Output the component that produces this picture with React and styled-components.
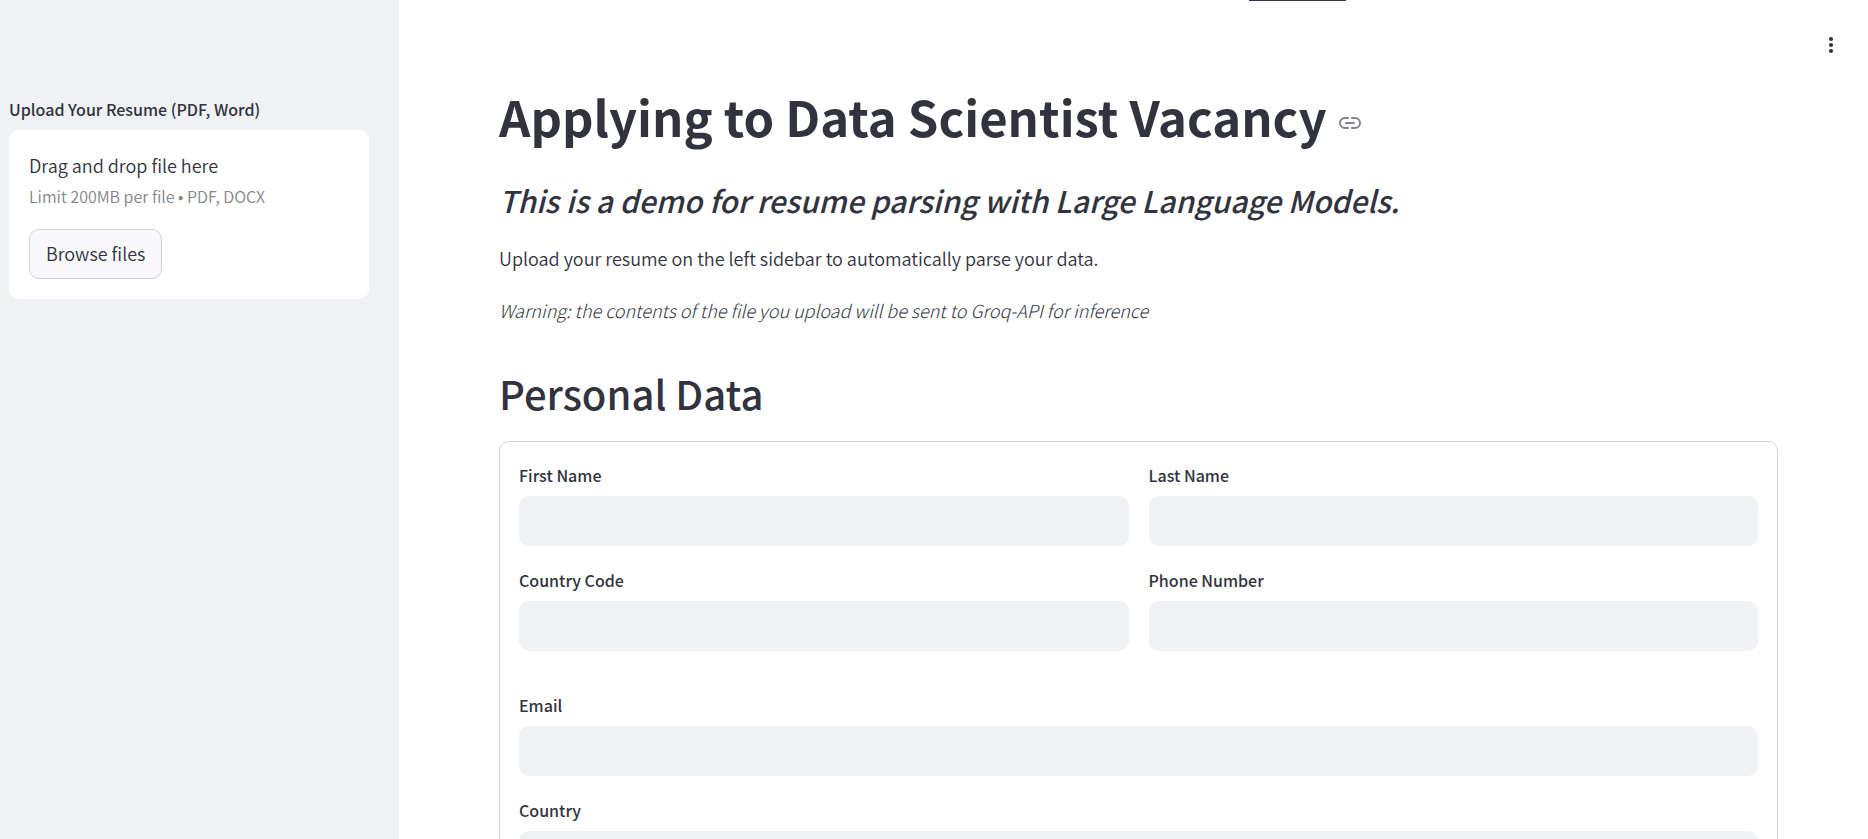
import React from "react";
import styled, { createGlobalStyle } from "styled-components";

const GlobalStyle = createGlobalStyle`
  *, *::before, *::after { box-sizing: border-box; }
  body {
    margin: 0;
    background: #fff;
    color: #31333f;
    font-family: "Noto Sans CJK JP", "Noto Sans", sans-serif;
    font-size: 18px;
    line-height: 32px;
  }
  button, input { font: inherit; color: inherit; }
`;

const Page = styled.div`
  display: flex;
  height: 100vh;
  overflow: hidden;
`;

const Sidebar = styled.aside`
  flex: 0 0 399px;
  padding: 95px 30px 0 9px;
  background: #f0f2f6;
`;

const Label = styled.label`
  display: block;
  height: 35px;
  font-size: 16px;
  font-weight: 500;
  line-height: 28px;
`;

const Dropzone = styled.section`
  display: flex;
  flex-direction: column;
  align-items: flex-start;
  padding: 20px;
  border-radius: 10px;
  background: #fff;
`;

const DropTitle = styled.span`
  font-weight: 350;
  line-height: 30px;
`;

const DropHint = styled.small`
  margin-bottom: 17px;
  font-size: 16px;
  font-weight: 350;
  color: #83858c;
`;

const BrowseButton = styled.button`
  height: 50px;
  padding: 0 16px 2px;
  border: 1px solid #d1d3d8;
  border-radius: 10px;
  background: #f9f9fb;
  font-weight: 350;
`;

const Main = styled.main`
  position: relative;
  flex: 1;
  min-width: 0;
  overflow: hidden;
`;

const Header = styled.header`
  display: flex;
  justify-content: flex-end;
  padding: 25px 17px 21px;
`;

const TopMark = styled.span`
  position: absolute;
  top: 0;
  right: 522px;
  width: 97px;
  height: 1px;
  background: #31394d;
`;

const MenuButton = styled.button`
  display: grid;
  place-items: center;
  width: 40px;
  height: 40px;
  padding: 0;
  border: 0;
  background: none;
`;

const Content = styled.div`
  padding: 0 90px 0 100px;
`;

const Title = styled.h1`
  display: flex;
  align-items: center;
  gap: 12px;
  margin: 0;
  font-size: 49px;
  font-weight: 700;
  line-height: 60px;
`;

const AnchorLink = styled.a`
  display: flex;
  padding-top: 14px;
  color: #83858c;
`;

const Subtitle = styled.h3`
  margin: 34px 0 22px;
  font-size: 30px;
  font-style: italic;
  font-weight: 500;
  line-height: 40px;
`;

const Paragraph = styled.p`
  margin: 0 0 20px;
  font-weight: ${(p) => (p.$italic ? 300 : 350)};
  font-style: ${(p) => (p.$italic ? "italic" : "normal")};
`;

const SectionTitle = styled.h2`
  margin: 40px 0 21px;
  font-size: 40px;
  font-weight: 500;
  line-height: 54px;
`;

const Form = styled.form`
  display: flex;
  flex-direction: column;
  gap: 40px;
  padding: 19px;
  border: 1px solid #d6d6d9;
  border-radius: 10px;
`;

const FieldGrid = styled.div`
  display: grid;
  grid-template-columns: repeat(${(p) => p.$columns}, minmax(0, 1fr));
  gap: 20px;
`;

const Input = styled.input`
  display: block;
  width: 100%;
  height: 50px;
  padding: 0 14px;
  border: 0;
  border-radius: 10px;
  background: #f0f2f6;
`;

function Field({ id, label, type = "text" }) {
  return (
    <div>
      <Label htmlFor={id}>{label}</Label>
      <Input id={id} type={type} />
    </div>
  );
}

export default function App() {
  return (
    <Page>
      <GlobalStyle />
      <Sidebar>
        <Label htmlFor="browse">Upload Your Resume (PDF, Word)</Label>
        <Dropzone>
          <DropTitle>Drag and drop file here</DropTitle>
          <DropHint>Limit 200MB per file • PDF, DOCX</DropHint>
          <BrowseButton id="browse" type="button">Browse files</BrowseButton>
        </Dropzone>
      </Sidebar>
      <Main>
        <TopMark />
        <Header>
          <MenuButton type="button" aria-label="Menu">
            <svg width="6" height="18" viewBox="0 0 6 18" fill="currentColor">
              <circle cx="3" cy="3" r="2.1" />
              <circle cx="3" cy="9" r="2.1" />
              <circle cx="3" cy="15" r="2.1" />
            </svg>
          </MenuButton>
        </Header>
        <Content>
          <Title id="title">
            Applying to Data Scientist Vacancy
            <AnchorLink href="#title" aria-label="Link to heading">
              <svg width="22" height="12" viewBox="0 0 22 12" fill="none" stroke="currentColor" strokeWidth="2" strokeLinecap="round">
                <path d="M9 1H6a5 5 0 0 0 0 10h3M13 1h3a5 5 0 0 1 0 10h-3M7 6h8" />
              </svg>
            </AnchorLink>
          </Title>
          <Subtitle>This is a demo for resume parsing with Large Language Models.</Subtitle>
          <Paragraph>Upload your resume on the left sidebar to automatically parse your data.</Paragraph>
          <Paragraph $italic>
            Warning: the contents of the file you upload will be sent to Groq-API for inference
          </Paragraph>
          <SectionTitle>Personal Data</SectionTitle>
          <Form>
            <FieldGrid $columns={2}>
              <Field id="first-name" label="First Name" />
              <Field id="last-name" label="Last Name" />
              <Field id="country-code" label="Country Code" />
              <Field id="phone" label="Phone Number" type="tel" />
            </FieldGrid>
            <FieldGrid $columns={1}>
              <Field id="email" label="Email" type="email" />
              <Field id="country" label="Country" />
            </FieldGrid>
          </Form>
        </Content>
      </Main>
    </Page>
  );
}
